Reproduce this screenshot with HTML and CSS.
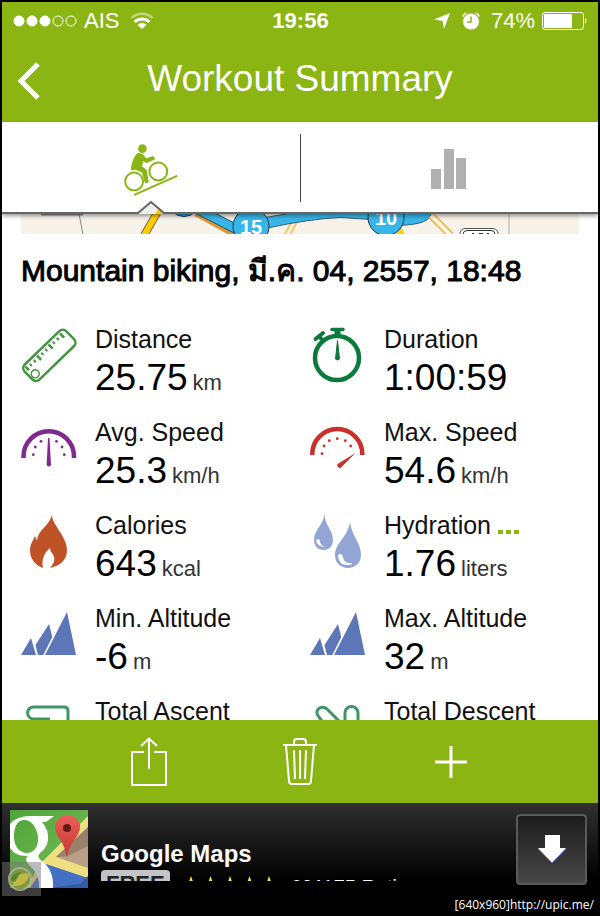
FILE: index.html
```html
<!DOCTYPE html>
<html lang="en">
<head>
    <meta charset="UTF-8">
    <meta name="viewport" content="width=device-width, initial-scale=1.0">
    <title>Workout Summary</title>
    <link rel="stylesheet" href="styles.css">
</head>
<body>
    <div class="screen">
        <header class="header">
            <div class="status-bar">
                <div class="status-left">
                    <svg width="64" height="12" viewBox="0 0 64 12" fill="#fff" stroke="#fff">
                        <circle cx="6" cy="6" r="5"/>
                        <circle cx="19" cy="6" r="5"/>
                        <circle cx="32" cy="6" r="5"/>
                        <circle cx="45" cy="6" r="5" fill="none"/>
                        <circle cx="58" cy="6" r="5" fill="none"/>
                    </svg>
                    <span>AIS</span>
                    <svg class="wifi" width="24" height="18" viewBox="0 0 24 18" fill="none" stroke="#fff" stroke-width="2.4">
                        <path d="M1.500 6A15 15 0 0 1 22.500 6" opacity=".45"/>
                        <path d="M4.500 10A11 11 0 0 1 19.500 10" stroke-width="3"/>
                        <path d="M12 17L7.500 13a6 6 0 0 1 9 0z" fill="#fff" stroke="none"/>
                    </svg>
                </div>
                <span class="clock">19:56</span>
                <div class="status-right">
                    <svg width="18" height="18" viewBox="0 0 18 18" fill="#fff"><path d="M17 1L11 17L9.500 9L1 7.500z"/></svg>
                    <svg class="alarm" width="18" height="18" viewBox="0 0 18 18">
                        <circle cx="9" cy="9.500" r="8" fill="#fff"/>
                        <path d="M9 4.500V10H5" fill="none" stroke="#8ab512" stroke-width="1.500"/>
                        <path d="M.8 4.500A5 5 0 0 1 4.500 1M13.500 1A5 5 0 0 1 17.200 4.500" fill="none" stroke="#fff" stroke-width="1.500"/>
                    </svg>
                    <span>74%</span>
                    <svg width="46" height="18" viewBox="0 0 46 18">
                        <rect x=".5" y=".5" width="41" height="17" rx="2.500" fill="none" stroke="#fff"/>
                        <rect x="2" y="2" width="28" height="14" rx="1" fill="#fff"/>
                        <path d="M43 6q3 3 0 6z" fill="#fff"/>
                    </svg>
                </div>
            </div>
            <nav class="nav-bar">
                <button class="back" aria-label="Back">
                    <svg width="24" height="38" viewBox="0 0 24 38" fill="none" stroke="#fff" stroke-width="5"><path d="M22 2L5 19L22 36"/></svg>
                </button>
                <h1>Workout Summary</h1>
            </nav>
        </header>

        <div class="tabs">
            <button class="tab active" aria-label="Summary">
                <svg width="56" height="55" viewBox="24 20 168 166" fill="none" stroke="#8ab512">
                    <circle cx="57" cy="139" r="27" stroke-width="6"/>
                    <circle cx="130" cy="109" r="27" stroke-width="6"/>
                    <path d="M59 179L185 123" stroke-width="6" stroke-linecap="round"/>
                    <circle cx="82" cy="40" r="13" fill="#8ab512" stroke="none"/>
                    <path d="M63 57q10-9 23 2l7 10 20-6q8 1 6 10l-22 10q-6 2-12-6l-4 17 12 8q4 4 4 12l4 26q-4 8-12 2l-8-30-20-8-13 2q-3-20 15-49z" fill="#8ab512" stroke="none"/>
                </svg>
                <svg class="notch" width="34" height="13" viewBox="0 0 34 13">
                    <path d="M3 13L17 2L31 13z" fill="#eee"/>
                    <path d="M21 13L25 7L31 13z" fill="#f7c21c"/>
                    <path d="M0 12H4L17 1L30 12H34" fill="none" stroke="#666" stroke-width="2"/>
                </svg>
            </button>
            <button class="tab" aria-label="Charts">
                <svg width="36" height="40" viewBox="0 0 36 40" fill="#b0b0b0">
                    <rect x="0" y="20" width="10" height="20"/>
                    <rect x="13" y="0" width="10" height="40"/>
                    <rect x="25" y="9" width="10" height="31"/>
                </svg>
            </button>
        </div>

        <main class="content">
            <svg class="map" viewBox="0 0 558 21" preserveAspectRatio="xMidYMid slice">
                <rect width="558" height="21" fill="#f7f2ea"/>
                <path d="M488 0V21" stroke="#aaa"/>
                <path d="M58 0L62 21" stroke="#888"/>
                <path d="M20 1H62" stroke="#888" stroke-width="2"/>
                <path d="M138-4L123 22" stroke="#7a6a3a" stroke-width="8"/>
                <path d="M138-4L123 22" stroke="#fc0" stroke-width="6"/>
                <circle cx="163" cy="-13" r="16" fill="#2ba8dc" stroke="#234"/>
                <path d="M263 22L271 8M269 22L276 8" stroke="#f5c869" stroke-width="2"/>
                <path d="M176-2L214 19" stroke="#e0962f" stroke-width="10"/>
                <path d="M177-4L216 16" stroke="#2f6076" stroke-width="10"/>
                <path d="M177-4L216 16" stroke="#38b6ea" stroke-width="8"/>
                <path d="M244 4L280 -2H350V6L320 4Q290 5 244 15z" fill="#38b6ea" stroke="#2f6076"/>
                <path d="M377-2H410Q412 11 377 12z" fill="#38b6ea" stroke="#2f6076"/>
                <path d="M410 2L430 22" stroke="#edae45" stroke-width="7"/>
                <path d="M410 2L430 22" stroke="#fff7d8" stroke-width="4"/>
                <path d="M374 22l6-9 4 9z" fill="#fc0"/>
                <circle cx="230" cy="13" r="18" fill="#38b6ea" stroke="#20333c"/>
                <circle cx="365" cy="4" r="18" fill="#38b6ea" stroke="#20333c"/>
                <text x="230" y="20" text-anchor="middle">15</text>
                <text x="365" y="11" text-anchor="middle">10</text>
                <rect x="439" y="15" width="38" height="20" rx="5" fill="#fff" stroke="#555"/>
                <rect x="442" y="17" width="32" height="18" rx="4" fill="#fff" stroke="#333"/>
                <path d="M451 20h2M458 20h4M466 20h2" stroke="#333"/>
            </svg>

            <h2>Mountain biking, มี.ค. 04, 2557, 18:48</h2>

            <div class="metrics">
                <div class="metric">
                    <svg class="icon" viewBox="0 0 56 76" fill="none" stroke="#43953f">
                        <g transform="rotate(-44 28 32)">
                            <rect x="-1" y="22" width="58" height="21" rx="5" stroke-width="2.500"/>
                            <circle cx="5" cy="36" r="4" stroke-width="1.500"/>
                            <path d="M3 24v5M19 24v6M35 24v6M51 24v6" stroke-width="2.500"/>
                            <path d="M8 25v3M13.500 25v3M24 25v3M29.500 25v3M40 25v3M45.500 25v3" stroke-width="2"/>
                        </g>
                    </svg>
                    <div>
                        <div class="label">Distance</div>
                        <div class="value">25.75<small>km</small></div>
                    </div>
                </div>
                <div class="metric">
                    <svg class="icon" viewBox="0 0 56 76" fill="#0c7a3d" stroke="#0c7a3d">
                        <circle cx="27" cy="35" r="22" fill="none" stroke-width="4.500"/>
                        <path d="M22 6.500H33" stroke-width="3.500" stroke-linecap="round"/>
                        <path d="M27.500 6V13" stroke-width="6"/>
                        <path d="M5.500 16L13 10" stroke-width="4" stroke-linecap="round"/>
                        <path d="M9 13L13 18" stroke-width="4"/>
                        <path d="M27.500 17.500L25.500 36q2 2 4 0z"/>
                    </svg>
                    <div>
                        <div class="label">Duration</div>
                        <div class="value">1:00:59</div>
                    </div>
                </div>

                <div class="metric">
                    <svg class="icon" viewBox="0 0 56 76" fill="#7f2a8e">
                        <path d="M2.500 42V40.500A25.200 25.200 0 0 1 53 40.500V42" fill="none" stroke="#7f2a8e" stroke-width="4.500"/>
                        <path d="M27 22h1.500L30 49q-2.200 3-4.400 0z"/>
                        <circle cx="12.300" cy="38.700" r="1.400"/>
                        <circle cx="14.300" cy="31" r="1.400"/>
                        <circle cx="20" cy="25.300" r="1.400"/>
                        <circle cx="35.500" cy="25.300" r="1.400"/>
                        <circle cx="41" cy="31" r="1.400"/>
                        <circle cx="43.300" cy="38.700" r="1.400"/>
                    </svg>
                    <div>
                        <div class="label">Avg. Speed</div>
                        <div class="value">25.3<small>km/h</small></div>
                    </div>
                </div>
                <div class="metric">
                    <svg class="icon" viewBox="0 0 56 76" fill="#c9302c">
                        <path d="M2.300 39V38A25 25 0 0 1 52.300 38V39" fill="none" stroke="#c9302c" stroke-width="4.500"/>
                        <path d="M45.500 37L27.500 48q-1 4 3 4z"/>
                        <circle cx="12" cy="37.700" r="1.400"/>
                        <circle cx="14" cy="30" r="1.400"/>
                        <circle cx="19.300" cy="24.700" r="1.400"/>
                        <circle cx="27.300" cy="22.700" r="1.400"/>
                        <circle cx="35.300" cy="24.700" r="1.400"/>
                        <circle cx="40.700" cy="30" r="1.400"/>
                    </svg>
                    <div>
                        <div class="label">Max. Speed</div>
                        <div class="value">54.6<small>km/h</small></div>
                    </div>
                </div>

                <div class="metric">
                    <svg class="icon" viewBox="0 0 56 76" fill="#bf5327">
                        <path d="M31 5C30 15 46 27 46 41C46 52 38 57 29 59C32 55 34 53 33 48C32 44 29 43 29 39C24 43 20 50 22 59C14 56 9 50 9 41C9 35 12 32 14 27L16 32C17 20 29 17 31 5z"/>
                    </svg>
                    <div>
                        <div class="label">Calories</div>
                        <div class="value">643<small>kcal</small></div>
                    </div>
                </div>
                <div class="metric">
                    <svg class="icon" viewBox="0 0 56 76" fill="#93a5d5">
                        <path d="M14.500 5C15 17 23 21 23 31C23 37 19 41 13.500 41C8 41 4 37 4 31C4 21 13 17 14.500 5z"/>
                        <path d="M40 13C42 28 51 34 51 46C51 54 45 59 38 59C31 59 25 54 25 46C25 34 38 28 40 13z"/>
                        <path d="M6 31q1 7 9 7q-5-2-5-6q-1-3-4-1z" fill="#fff"/>
                        <path d="M28 46q0 10 10 10q4 0 4-2q-8 1-9-6q-1-5-5-2z" fill="#fff"/>
                    </svg>
                    <div>
                        <div class="label">Hydration <span class="more"><i></i><i></i><i></i></span></div>
                        <div class="value">1.76<small>liters</small></div>
                    </div>
                </div>

                <div class="metric">
                    <svg class="icon" viewBox="0 0 56 76" fill="#5d76b8">
                        <path d="M0 53L10 36L15 53zM14.500 43L28 22L31.300 35L22.300 53H17zM24 53L46 10L55 53z"/>
                    </svg>
                    <div>
                        <div class="label">Min. Altitude</div>
                        <div class="value">-6<small>m</small></div>
                    </div>
                </div>
                <div class="metric">
                    <svg class="icon" viewBox="0 0 56 76" fill="#5d76b8">
                        <path d="M0 53L10 36L15 53zM14.500 43L28 22L31.300 35L22.300 53H17zM24 53L46 10L55 53z"/>
                    </svg>
                    <div>
                        <div class="label">Max. Altitude</div>
                        <div class="value">32<small>m</small></div>
                    </div>
                </div>

                <div class="metric">
                    <svg class="icon" viewBox="0 0 56 76" fill="none" stroke="#3f9568" stroke-width="3">
                        <path d="M47 40V16Q47 12 43 12H13C4 12 5 24 13 24H29"/>
                    </svg>
                    <div>
                        <div class="label">Total Ascent</div>
                    </div>
                </div>
                <div class="metric">
                    <svg class="icon" viewBox="0 0 56 76" fill="none" stroke="#3f9568" stroke-width="3">
                        <path d="M12 26L9 22C3 16 11 9 17 14L31 28M35 40V18a6.500 6.500 0 0 1 13 0V40"/>
                    </svg>
                    <div>
                        <div class="label">Total Descent</div>
                    </div>
                </div>
            </div>
        </main>

        <div class="toolbar">
            <button aria-label="Share">
                <svg width="38" height="50" viewBox="0 0 38 50" fill="none" stroke="#fff" stroke-width="2">
                    <path d="M14 15H2V48H36V15H24M19 32V2M11 9L19 1.500L27 9"/>
                </svg>
            </button>
            <button aria-label="Delete">
                <svg width="36" height="50" viewBox="0 0 36 50" fill="none" stroke="#fff" stroke-width="2">
                    <path d="M1 8H35M4 8L7 44Q7 47 10 47H26Q29 47 29 44L32 8M12 8V5Q12 2 15 2H21Q24 2 24 5V8M12 13L13 42M18 13V42M24 13L23 42"/>
                </svg>
            </button>
            <button aria-label="Add">
                <svg width="34" height="34" viewBox="0 0 34 34" stroke="#fff" stroke-width="3"><path d="M1 17H33M17 1V33"/></svg>
            </button>
        </div>

        <aside class="ad">
            <svg class="ad-icon" width="78" height="78" viewBox="0 0 78 78">
                <defs>
                    <linearGradient id="pin" x2="0" y2="1"><stop offset="0" stop-color="#e8605a"/><stop offset="1" stop-color="#c93531"/></linearGradient>
                    <linearGradient id="land" x2="1" y2="1"><stop offset="0" stop-color="#4fa53a"/><stop offset="1" stop-color="#79be58"/></linearGradient>
                </defs>
                <rect width="78" height="78" fill="url(#land)"/>
                <path d="M30 54L78 6V78H16z" fill="#f0df80"/>
                <path d="M46 47L78 17V58z" fill="#b99f86"/>
                <path d="M46 47L78 17V36L58 46z" fill="#98806b"/>
                <path d="M36 54L78 68V78H20z" fill="#4470c4"/>
                <path d="M78 66L70 74L36 78H78z" fill="#345aa6"/>
                <path fill-rule="evenodd" d="M0 14Q7 6 20 6H44L36 12H32Q39 20 38 30Q37 38 30 43Q26 47 32 51Q44 60 43 78H29Q30 65 20 56Q13 49 18 46Q6 47 0 38zM4 24C3 35 9 43 17 43C25 43 29 35 28 26C26 16 21 10 14 10C8 10 5 15 4 24z" fill="#fff"/>
                <path d="M57 48Q56 38 49 28Q45 22 45 17A12.500 12 0 0 1 70 17Q70 22 65 29Q58 38 57 48z" fill="url(#pin)"/>
                <circle cx="57" cy="18" r="4" fill="#681a17"/>
            </svg>
            <div class="ad-text">
                <a href="#">Google Maps</a>
                <div class="ad-info">
                    <b class="free">FREE</b>
                    <svg class="stars" width="98" height="20" viewBox="0 0 98 20" fill="#f4e242">
                        <path id="star" d="M10 0l2.500 7H20l-6 4.500 2.500 7.500L10 14.500 3.500 19 6 11.500 0 7h7.500z"/>
                        <use href="#star" x="19.500"/>
                        <use href="#star" x="39"/>
                        <use href="#star" x="58.500"/>
                        <use href="#star" x="78"/>
                    </svg>
                    <span>691175 Ratings</span>
                </div>
            </div>
            <button class="download" aria-label="Download">
                <svg width="30" height="30" viewBox="0 0 30 30"><path d="M8 1H23V14H29L15 29L1 14H8z" fill="#fff"/><path d="M1 15L15 29L29 15" fill="none" stroke="#4a5fae"/></svg>
            </button>
            <svg class="badge" width="39" height="34" viewBox="0 0 39 34">
                <rect width="39" height="34" fill="#777" opacity=".5"/>
                <circle cx="18" cy="17" r="11" fill="#809a32" stroke="#aeb89a" stroke-width="2" opacity=".8"/>
                <path d="M10 24Q14 8 27 12Q26 25 10 24z" fill="#d2bd4a" opacity=".8"/>
                <path d="M9 17Q13 10 19 10L13 20z" fill="#3f7d2e" opacity=".7"/>
            </svg>
        </aside>

        <footer class="footer">[640x960]http://upic.me/</footer>
    </div>
</body>
</html>
```
FILE: styles.css
```css
* {
    box-sizing: border-box;
}

body {
    margin: 0;
    background-color: #000;
    color: #111;
    font-family: "Liberation Sans", Arial, sans-serif;
}

button {
    background: none;
    border: none;
    padding: 0;
    cursor: pointer;
}

svg {
    display: block;
    flex-shrink: 0;
}

.screen {
    height: 100vh;
    padding: 2px 2px 0;
    display: flex;
    flex-direction: column;
}

/* header */
.header {
    background-color: #8ab512;
    color: #fff;
}

.status-bar {
    display: grid;
    grid-template-columns: 1fr auto 1fr;
    align-items: center;
    height: 38px;
    padding: 0 10px 0 11px;
    font-size: 22px;
}

.status-left,
.status-right {
    display: flex;
    align-items: center;
    gap: 7px;
}

.status-right {
    justify-content: flex-end;
}

.wifi {
    margin-left: 4px;
}

.alarm {
    margin: 0 4px;
}

.clock {
    font-weight: bold;
}

.nav-bar {
    display: grid;
    grid-template-columns: 40px 1fr 40px;
    align-items: center;
    height: 82px;
    padding: 0 14px;
}

.nav-bar h1 {
    margin: 0;
    padding-bottom: 4px;
    font-size: 37px;
    font-weight: normal;
    text-align: center;
    white-space: nowrap;
}

/* tabs */
.tabs {
    position: relative;
    display: flex;
    height: 92px;
    background-color: #fff;
    border-bottom: 2px solid #666;
    box-shadow: 0 2px 4px rgba(0, 0, 0, 0.4);
}

.tab {
    position: relative;
    flex: 1;
    display: flex;
    justify-content: center;
    align-items: center;
    padding-top: 4px;
}

.tab + .tab::before {
    content: "";
    position: absolute;
    left: 0;
    top: 12px;
    bottom: 10px;
    width: 1px;
    background-color: #444;
}

.notch {
    position: absolute;
    left: 50%;
    bottom: -2px;
    transform: translateX(-50%);
}

/* workout data */
.content {
    flex: 1;
    min-height: 0;
    overflow: hidden;
    padding: 0 19px;
    background-color: #fff;
}

.map {
    width: 100%;
    height: 20px;
}

.map text {
    fill: #fff;
    font-size: 20px;
    font-weight: bold;
}

h2 {
    margin: 17px 0 32px;
    font-size: 30px;
    font-weight: normal;
    line-height: 40px;
    white-space: nowrap;
    color: #000;
    -webkit-text-stroke: 1px #000;
}

.metrics {
    display: grid;
    grid-template-columns: 1fr 1fr;
    gap: 15px 20px;
}

.metric {
    display: flex;
    gap: 18px;
    height: 78px;
    white-space: nowrap;
}

.icon {
    width: 56px;
    height: 76px;
}

.label {
    font-size: 25px;
    line-height: 33px;
}

.value {
    display: flex;
    align-items: baseline;
    gap: 5px;
    font-size: 37px;
    line-height: 44px;
    color: #000;
}

.value small {
    font-size: 22px;
    line-height: 24px;
    color: #333;
}

.more {
    display: inline-flex;
    gap: 3px;
}

.more i {
    width: 5px;
    height: 4px;
    background-color: #8ab512;
}

/* bottom bars */
.toolbar {
    display: flex;
    align-items: center;
    height: 83px;
    padding: 0 72px;
    background-color: #8ab512;
}

.toolbar button {
    flex: 1;
    display: flex;
    justify-content: center;
}

.ad {
    position: relative;
    display: flex;
    align-items: center;
    height: 92px;
    padding: 0 11px 0 8px;
    background: linear-gradient(#303030, #000 85%);
}

.ad-text {
    flex: 1;
    align-self: flex-start;
    height: 78px;
    padding: 37px 0 0 13px;
    overflow: hidden;
    white-space: nowrap;
}

.ad-text a {
    display: block;
    color: #fff;
    font-size: 24px;
    font-weight: bold;
    line-height: 28px;
    text-decoration: none;
}

.ad-info {
    display: flex;
    align-items: flex-start;
    margin-top: 2px;
    color: #fff;
    font-size: 20px;
}

.free {
    padding: 0 5px;
    border-radius: 4px;
    background-color: #c4c4c8;
    color: #222;
    font-size: 22px;
    line-height: 28px;
}

.stars {
    margin: 6px 12px 0 11px;
}

.ad-info span {
    padding-top: 6px;
}

.download {
    display: flex;
    justify-content: center;
    align-items: center;
    width: 71px;
    height: 71px;
    border: 2px solid #5a5a5a;
    border-radius: 4px;
    background: linear-gradient(#1c1c1c, #484848);
}

.badge {
    position: absolute;
    left: 0;
    bottom: -1px;
}

.footer {
    height: 21px;
    padding-right: 4px;
    color: #fff;
    font-family: "Open Sans", sans-serif;
    font-size: 12px;
    line-height: 20px;
    text-align: right;
}
```
